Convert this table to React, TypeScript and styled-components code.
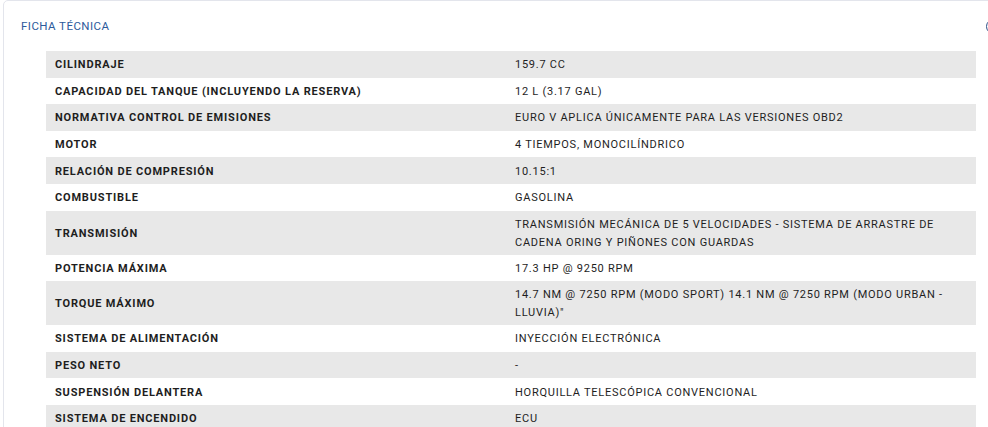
import styled, { createGlobalStyle } from 'styled-components';

const specs: [string, string][] = [
  ['CILINDRAJE', '159.7 CC'],
  ['CAPACIDAD DEL TANQUE (INCLUYENDO LA RESERVA)', '12 L (3.17 GAL)'],
  ['NORMATIVA CONTROL DE EMISIONES', 'EURO V APLICA ÚNICAMENTE PARA LAS VERSIONES OBD2'],
  ['MOTOR', '4 TIEMPOS, MONOCILÍNDRICO'],
  ['RELACIÓN DE COMPRESIÓN', '10.15:1'],
  ['COMBUSTIBLE', 'GASOLINA'],
  [
    'TRANSMISIÓN',
    'TRANSMISIÓN MECÁNICA DE 5 VELOCIDADES - SISTEMA DE ARRASTRE DE CADENA ORING Y PIÑONES CON GUARDAS',
  ],
  ['POTENCIA MÁXIMA', '17.3 HP @ 9250 RPM'],
  [
    'TORQUE MÁXIMO',
    '14.7 NM @ 7250 RPM (MODO SPORT) 14.1 NM @ 7250 RPM (MODO URBAN - LLUVIA)"',
  ],
  ['SISTEMA DE ALIMENTACIÓN', 'INYECCIÓN ELECTRÓNICA'],
  ['PESO NETO', '-'],
  ['SUSPENSIÓN DELANTERA', 'HORQUILLA TELESCÓPICA CONVENCIONAL'],
  ['SISTEMA DE ENCENDIDO', 'ECU'],
];

const GlobalStyle = createGlobalStyle`
  body {
    margin: 0;
    background: #fff;
    overflow: hidden;
    font-family: Roboto, 'Liberation Sans', sans-serif;
  }
`;

const Card = styled.section`
  box-sizing: border-box;
  margin-left: 3px;
  width: 1010px;
  border: 1px solid #e3e5ec;
  border-radius: 5px;
  padding: 0 0 0 17px;
`;

const Header = styled.header`
  display: flex;
  align-items: center;
  justify-content: space-between;
  height: 50px;
  padding-right: 11px;
`;

const Title = styled.h2`
  margin: 0;
  font-size: 11.5px;
  font-weight: 400;
  letter-spacing: 0.45px;
  color: #2d5a9c;
`;

const Toggle = styled.span`
  display: block;
  width: 13px;
  height: 13px;
  border: 1.5px solid #2d4f86;
  border-radius: 50%;
`;

const Table = styled.div`
  margin-left: 25px;
  width: 930px;
`;

const Row = styled.div<{ $shade: boolean }>`
  display: grid;
  grid-template-columns: 460px 1fr;
  align-items: center;
  min-height: 26.6px;
  padding: 5px 9px 3px;
  box-sizing: border-box;
  background: ${(p) => (p.$shade ? '#e8e8e8' : '#fff')};
  color: #1e1e1e;
  font-size: 11px;
  line-height: 18px;
`;

const Label = styled.div`
  font-weight: 700;
  letter-spacing: 0.82px;
`;

const Value = styled.div`
  font-weight: 400;
  letter-spacing: 0.75px;
  padding-right: 12px;
`;

export default function App() {
  return (
    <>
      <GlobalStyle />
      <Card>
        <Header>
          <Title>FICHA TÉCNICA</Title>
          <Toggle />
        </Header>
        <Table>
          {specs.map(([label, value], i) => (
            <Row key={label} $shade={i % 2 === 0}>
              <Label>{label}</Label>
              <Value>{value}</Value>
            </Row>
          ))}
        </Table>
      </Card>
    </>
  );
}
